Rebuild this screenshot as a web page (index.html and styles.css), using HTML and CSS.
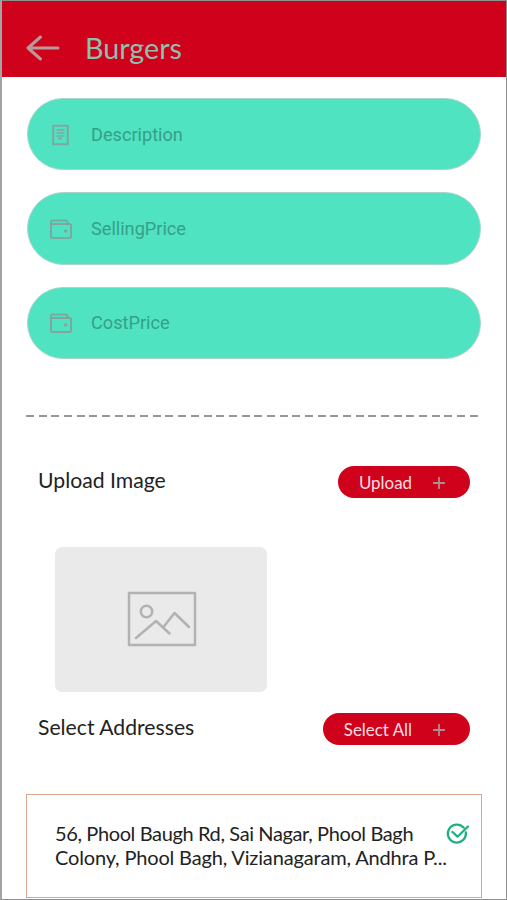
FILE: index.html
```html
<!DOCTYPE html>
<html lang="en">
<head>
<meta charset="utf-8">
<meta name="viewport" content="width=device-width, initial-scale=1">
<title>Burgers</title>
<link rel="stylesheet" href="styles.css">
</head>
<body>
<div class="screen">
  <header class="topbar">
    <svg class="back" width="34" height="26" viewBox="0 0 34 26">
      <path d="M14.500 2L2 13l12.500 11M2.500 13H32"/>
    </svg>
    <h1>Burgers</h1>
  </header>

  <form class="fields">
    <label class="field">
      <svg class="icon" width="22" height="22" viewBox="0 0 22 22">
        <path d="M3.200 1.700h14.600v18.600H3.200z"/>
        <path class="thin" d="M7 6h7M7 9h7M7 12h7M8.500 14.500h3"/>
      </svg>
      <input type="text" placeholder="Description">
    </label>
    <label class="field">
      <svg class="icon" width="22" height="22" viewBox="0 0 22 22">
        <path d="M1 18.500V4.200Q1 2.500 2.700 2.500H16.500L18.500 6M1 6H19.500Q21 6 21 7.500V18.500Q21 20 19.500 20H2.500Q1 20 1 18.500z"/>
        <circle class="dot" cx="15.700" cy="13" r="1.700"/>
      </svg>
      <input type="text" placeholder="SellingPrice">
    </label>
    <label class="field">
      <svg class="icon" width="22" height="22" viewBox="0 0 22 22">
        <path d="M1 18.500V4.200Q1 2.500 2.700 2.500H16.500L18.500 6M1 6H19.500Q21 6 21 7.500V18.500Q21 20 19.500 20H2.500Q1 20 1 18.500z"/>
        <circle class="dot" cx="15.700" cy="13" r="1.700"/>
      </svg>
      <input type="text" placeholder="CostPrice">
    </label>
  </form>

  <div class="divider"></div>

  <section class="row upload">
    <h2>Upload Image</h2>
    <button class="pill" type="button">Upload
      <svg width="12" height="12" viewBox="0 0 12 12"><path d="M6 0.500v11M0.500 6h11"/></svg>
    </button>
  </section>

  <div class="preview">
    <svg width="70" height="56" viewBox="0 0 70 56">
      <path d="M2 2h66v52H2z"/>
      <circle cx="19.500" cy="20.500" r="5.700"/>
      <path d="M9 47L29 30l13.500 12.500M36.500 36L47.500 22l14.500 14"/>
    </svg>
  </div>

  <section class="row addresses">
    <h2>Select Addresses</h2>
    <button class="pill" type="button">Select All
      <svg width="12" height="12" viewBox="0 0 12 12"><path d="M6 0.500v11M0.500 6h11"/></svg>
    </button>
  </section>

  <div class="card">
    <p><span class="street">56, Phool Baugh Rd, Sai Nagar, Phool Bagh</span><br>Colony, Phool Bagh, Vizianagaram, Andhra P...</p>
    <svg class="check" width="24" height="22" viewBox="0 0 24 22">
      <path d="M17.600 4.600A9 9 0 1 0 19.800 9.500M6.500 9l5 4.700L22 3.500"/>
    </svg>
  </div>
</div>
</body>
</html>
```
FILE: styles.css
```css
* {
  box-sizing: border-box;
}

body {
  margin: 0;
  background: #fff;
  font-family: Lato, "Liberation Sans", sans-serif;
  color: #222;
}

.screen {
  height: 900px;
  overflow: hidden;
  border: 1px solid #8f8f8f;
  border-left: 2px solid #a3a3a3;
}

h1, h2, p {
  margin: 0;
  font-weight: 400;
}

svg {
  display: block;
  flex: none;
  fill: none;
  stroke-linecap: round;
  stroke-linejoin: round;
}

.topbar {
  display: flex;
  align-items: center;
  height: 76px;
  padding: 18px 0 0 24px;
  background: #d0021b;
}

.back {
  stroke: #b99a9a;
  stroke-width: 3;
}

.topbar h1 {
  margin-left: 25px;
  font-size: 28.700px;
  line-height: 36px;
  color: #8fbfaf;
}

.fields {
  display: flex;
  flex-direction: column;
  gap: 22px;
  padding: 21px 25px 0;
}

.field {
  display: flex;
  align-items: center;
  gap: 19px;
  height: 72.300px;
  padding-left: 22px;
  border: 1px solid #a9d5c8;
  border-radius: 37px;
  background: #50e3c2;
}

.icon {
  margin-top: 1px;
  stroke: #7fa79f;
  stroke-width: 2;
}

.icon .thin {
  stroke-width: 1.300;
}

.icon .dot {
  fill: #7fa79f;
  stroke: none;
}

.field input {
  flex: 1;
  min-width: 0;
  padding: 0;
  border: 0;
  outline: 0;
  background: none;
  font: 18.150px Roboto, sans-serif;
}

.field input::placeholder {
  color: #35a088;
  opacity: 1;
}

.divider {
  height: 2px;
  margin: 56px 27px 0 24px;
  background: repeating-linear-gradient(90deg, #979797 0, #979797 8px, transparent 8px, transparent 12.680px);
}

.row {
  display: flex;
  align-items: center;
  justify-content: space-between;
  padding: 0 36px;
}

.row h2 {
  padding-bottom: 5px;
  font-size: 21.200px;
  line-height: 28px;
}

.upload {
  margin-top: 49px;
}

.pill {
  display: flex;
  align-items: center;
  gap: 21px;
  height: 32px;
  padding: 1px 25px 0 21px;
  border: 0;
  border-radius: 16px;
  background: #d0021b;
  font: 16.900px Lato, sans-serif;
  color: #fbdfe2;
}

.pill svg {
  margin-top: 1px;
  stroke: #ae8f8d;
  stroke-width: 1.800;
}

.preview {
  display: flex;
  align-items: center;
  justify-content: center;
  width: 212px;
  height: 145px;
  margin: 48px 0 0 53px;
  padding-left: 2px;
  border-radius: 7px;
  background: #eaeaea;
}

.preview svg {
  stroke: #b2b2b2;
  stroke-width: 2.500;
}

.addresses {
  margin-top: 21px;
}

.card {
  display: flex;
  justify-content: space-between;
  height: 104px;
  margin: 48px 24px 0;
  padding: 26px 11px 0 28px;
  border: 1px solid #d9a68e;
}

.card p {
  width: 0;
  font-size: 20px;
  letter-spacing: -0.160px;
  line-height: 24.500px;
  white-space: nowrap;
}

.card .street {
  letter-spacing: -0.380px;
}

.check {
  margin-top: 2px;
  stroke: #1faf82;
  stroke-width: 2.300;
}
```
